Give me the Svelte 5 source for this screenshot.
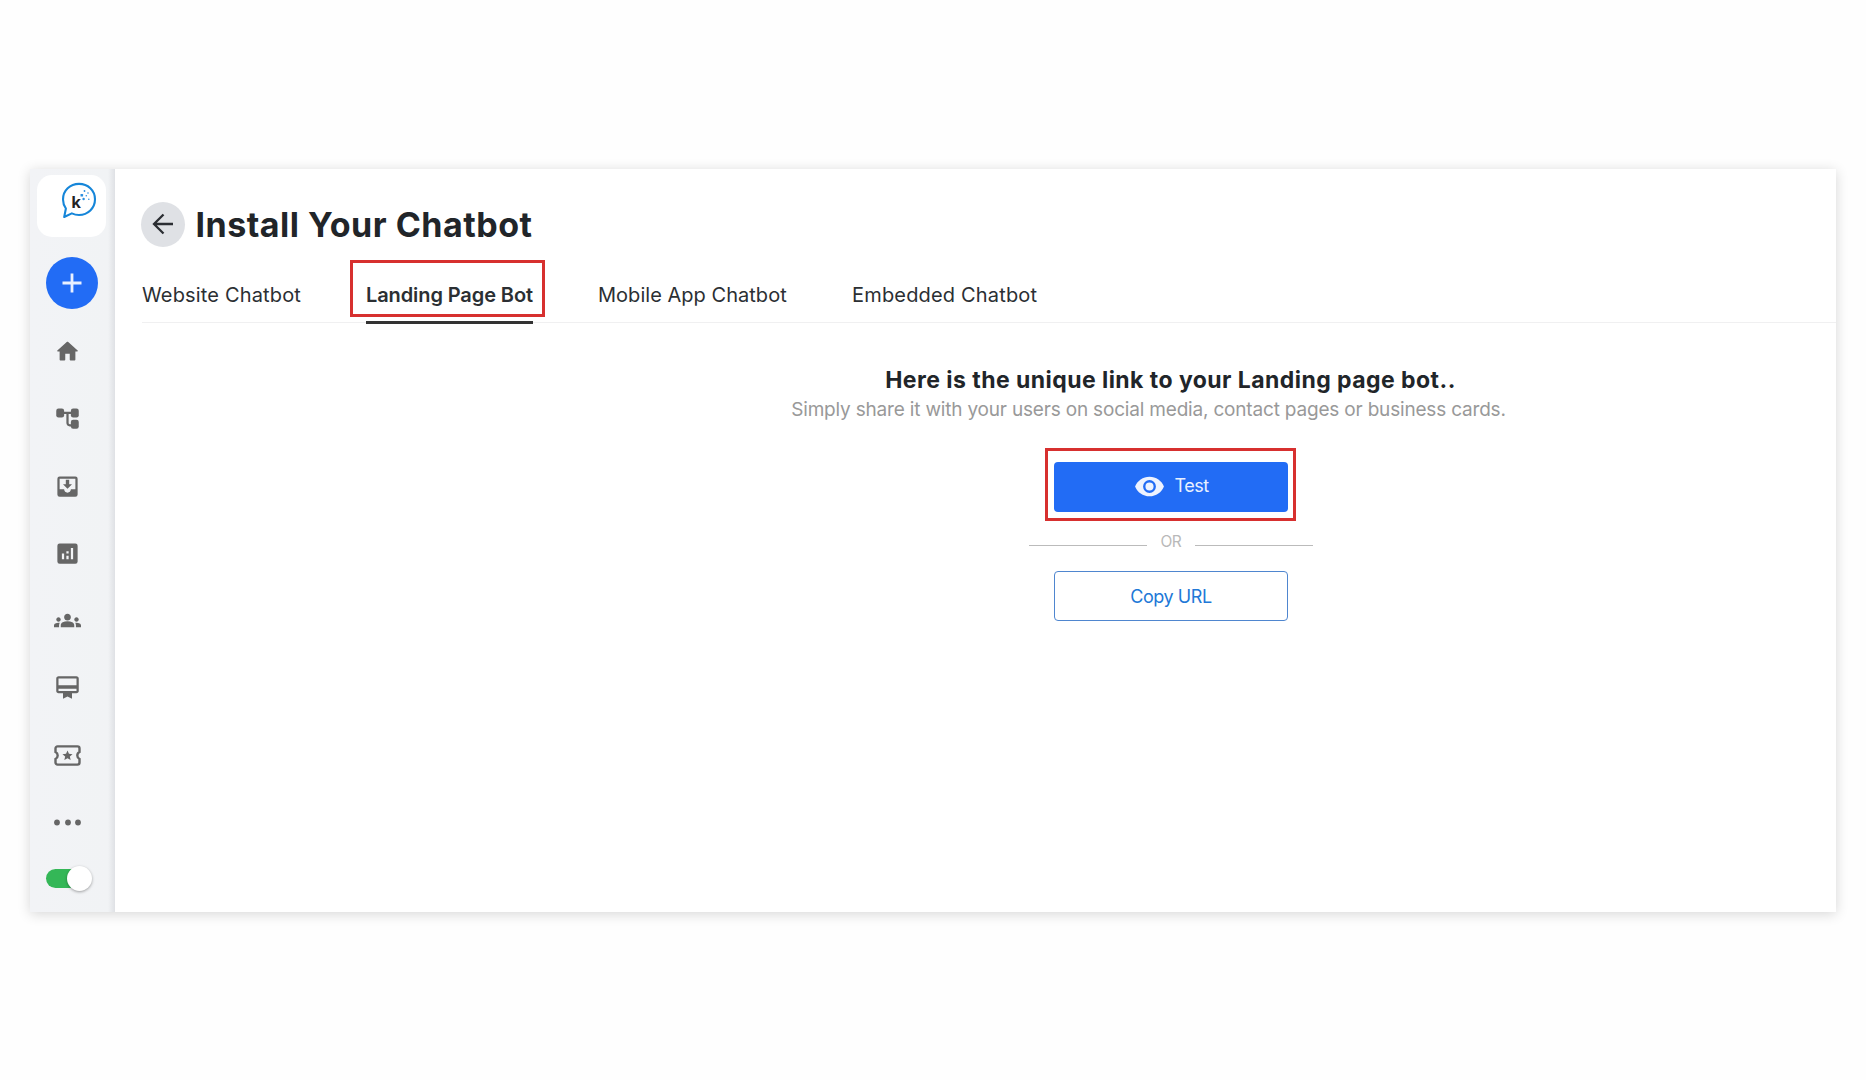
<script>
  const tabs = [
    { id: 'website', label: 'Website Chatbot' },
    { id: 'landing', label: 'Landing Page Bot' },
    { id: 'mobile', label: 'Mobile App Chatbot' },
    { id: 'embedded', label: 'Embedded Chatbot' }
  ];
  let active = $state('landing');
  let online = $state(true);
</script>

<div class="page">
<div class="card">
  <aside>
    <div class="logo">
      <svg viewBox="0 0 36 37" width="36" height="37">
        <path d="M18 1.900c8.900 0 16 6.500 16 15.400S26.900 33 18 33c-2.700 0-5-.6-7.200-1.600L3.200 35l1.700-8.500C3.200 24 2 21 2 17.400 2 8.500 9.100 1.900 18 1.900z" fill="#fff" stroke="#1686d9" stroke-width="2.100" stroke-linejoin="round" />
        <g fill="#2b8fe0">
          <rect x="19.500" y="12" width="2.600" height="2.600" rx=".6" />
          <circle cx="23.500" cy="9" r=".9" />
          <circle cx="27" cy="11" r=".8" />
          <circle cx="25.300" cy="13.800" r=".8" />
          <circle cx="22.600" cy="17" r="1.200" />
          <circle cx="27.800" cy="17.300" r=".8" />
        </g>
        <text x="10.300" y="26.300" class="mark">k</text>
      </svg>
    </div>
    <button class="add" aria-label="Add">
      <svg viewBox="0 0 20 20" width="20" height="20"><path d="M10 .5v19M.5 10h19" stroke="#e9f0ff" stroke-width="2.800" /></svg>
    </button>
    <nav>
      <svg viewBox="0 0 24 24"><path d="M10 19v-5h4v5c0 .55.45 1 1 1h3c.55 0 1-.45 1-1v-7h1.700c.46 0 .68-.57.33-.87L12.670 3.600c-.38-.34-.96-.34-1.340 0l-8.360 7.530c-.34.3-.13.87.33.87H5v7c0 .55.45 1 1 1h3c.55 0 1-.45 1-1z" /></svg>
      <svg viewBox="0 0 24 24"><rect x="2" y="3" width="7" height="8" rx="2" /><rect x="15" y="3" width="7" height="8" rx="2" /><rect x="15" y="13" width="7" height="8" rx="2" /><path d="M8 6h8v2h-3v8c0 .55.45 1 1 1h2v2h-2c-1.650 0-3-1.350-3-3V8H8z" /></svg>
      <svg viewBox="0 0 24 24"><path d="M19 3H5a2 2 0 0 0-2 2v14a2 2 0 0 0 2 2h14a2 2 0 0 0 2-2V5a2 2 0 0 0-2-2zm0 11.500h-4c0 1.700-1.350 3-3 3s-3-1.300-3-3H5V5h14zM16 10h-2.500V6h-3v4H8l4 4z" /></svg>
      <svg viewBox="0 0 24 24"><path d="M19 3H5a2 2 0 0 0-2 2v14a2 2 0 0 0 2 2h14a2 2 0 0 0 2-2V5a2 2 0 0 0-2-2zM9 17H7v-5h2zm4 0h-2v-3h2zm0-5h-2v-2h2zm4 5h-2V7h2z" fill-rule="evenodd" /></svg>
      <svg viewBox="0 0 24 24"><path d="M12 12.750c1.630 0 3.070.39 4.240.9 1.080.48 1.760 1.560 1.760 2.730V18H6v-1.610c0-1.180.68-2.260 1.760-2.730 1.170-.52 2.610-.91 4.240-.91zM4 13c1.100 0 2-.9 2-2s-.9-2-2-2-2 .9-2 2 .9 2 2 2zm1.130 1.100C4.760 14.040 4.390 14 4 14c-.99 0-1.930.21-2.780.58C.48 14.900 0 15.620 0 16.430V18h4.500v-1.610c0-.83.23-1.610.63-2.290zM20 13c1.100 0 2-.9 2-2s-.9-2-2-2-2 .9-2 2 .9 2 2 2zm4 3.430c0-.81-.48-1.530-1.220-1.850C21.930 14.210 20.990 14 20 14c-.39 0-.76.04-1.130.1.400.68.630 1.460.630 2.290V18H24zM12 6c1.660 0 3 1.340 3 3s-1.340 3-3 3-3-1.340-3-3 1.340-3 3-3z" /></svg>
      <svg viewBox="0 0 24 24"><path d="M20 2H4c-1.110 0-2 .89-2 2v11c0 1.110.89 2 2 2h4v5l4-2 4 2v-5h4c1.110 0 2-.89 2-2V4c0-1.110-.89-2-2-2zm0 13H4v-2h16zm0-5H4V4h16z" /></svg>
      <svg viewBox="0 0 27 24"><path d="M3.500 2.900h20a2 2 0 0 1 2 2v3.600a3.900 3.900 0 0 0 0 7v3.600a2 2 0 0 1-2 2h-20a2 2 0 0 1-2-2v-3.600a3.900 3.900 0 0 0 0-7V4.900a2 2 0 0 1 2-2z" fill="none" stroke="#666" stroke-width="2.400" /><path d="M13.500 7l1.450 3.300 3.600.35-2.700 2.400.8 3.550-3.150-1.850-3.150 1.850.8-3.550-2.700-2.400 3.600-.35z" /></svg>
      <svg viewBox="0 0 27 24"><circle cx="3" cy="12" r="2.900" /><circle cx="14" cy="12" r="2.900" /><circle cx="24" cy="12" r="2.900" /></svg>
    </nav>
    <button class="toggle" class:on={online} aria-label="Online" onclick={() => (online = !online)}><span></span></button>
  </aside>

  <main>
    <header>
      <button class="back" aria-label="Back">
        <svg viewBox="0 0 22 22" width="22" height="22"><path d="M21 11H2M11.500 1.500L2 11l9.500 9.500" fill="none" stroke="#2b2e33" stroke-width="2.300" /></svg>
      </button>
      <h1>Install Your Chatbot</h1>
    </header>
    <div class="tabs">
      {#each tabs as tab}
        <button class="tab {tab.id}" class:active={active === tab.id} onclick={() => (active = tab.id)}>{tab.label}</button>
      {/each}
    </div>
    <section>
      <h2>Here is the unique link to your Landing page bot..</h2>
      <p>Simply share it with your users on social media, contact pages or business cards.</p>
      <div class="highlight">
        <button class="test">
          <svg viewBox="1 4 22 16" width="29" height="21"><path d="M12 4.500C7 4.500 2.730 7.610 1 12c1.730 4.390 6 7.500 11 7.500s9.270-3.110 11-7.500c-1.730-4.390-6-7.500-11-7.500z" fill="#eef3ff" /><circle cx="12" cy="12" r="4" fill="none" stroke="#226cf5" stroke-width="1.800" /></svg>
          <span>Test</span>
        </button>
      </div>
      <div class="or"><i></i><span>OR</span><i></i></div>
      <button class="copy"><span>Copy URL</span></button>
    </section>
  </main>
</div>
</div>

<style>
  :global(body) { margin: 0; background: #fefefe; font-family: Inter, "Liberation Sans", sans-serif; color: #212529; }
  .page, .page :global(*), .page :global(*::before) { box-sizing: border-box; }
  .page { height: 1080px; padding: 169px 0 0 30px; }
  button { font: inherit; color: inherit; border: 0; padding: 0; margin: 0; background: none; }
  svg { display: block; flex: none; }
  .card { display: flex; width: 1806px; height: 743px; background: #fff; box-shadow: 0 2px 12px rgba(0, 0, 0, .16); }
  aside { width: 85px; flex: none; padding: 6px 0 0 7px; background: linear-gradient(90deg, #f2f3f6 0, #f1f3f5 78px, #dfe1e5 85px); }
  .logo { width: 69px; height: 62px; border-radius: 15px; background: #fff; padding: 7px 0 0 24px; }
  .mark { font: 700 15.500px "Open Sans", sans-serif; fill: #222; }
  .add { display: flex; align-items: center; justify-content: center; width: 52px; height: 52px; margin: 19.500px 0 0 9px; border-radius: 50%; background: #226cf5; }
  nav { display: flex; flex-direction: column; gap: 40.300px; padding: 29.500px 0 0 16.800px; }
  nav svg { width: 27px; height: 27px; fill: #666; overflow: visible; }
  .toggle { display: flex; align-items: center; width: 44px; height: 19px; margin: 33px 0 0 9px; border-radius: 10px; background: #aaa; }
  .toggle.on { background: #34b757; }
  .toggle span { width: 25px; height: 25px; flex: none; border-radius: 50%; background: #fff; box-shadow: 0 1px 3px rgba(0, 0, 0, .35); }
  .toggle.on span { margin-left: 21px; }
  main { flex: 1; min-width: 0; }
  header { display: flex; align-items: center; height: 46px; padding-left: 26px; margin-top: 32px; }
  .back { display: flex; align-items: center; justify-content: center; width: 44px; height: 45px; border-radius: 50%; background: #dfe1e5; }
  h1 { margin: 1px 0 0 10.500px; font-size: 34px; line-height: 46px; font-weight: 700; letter-spacing: .5px; white-space: nowrap; }
  .tabs { display: flex; align-items: flex-start; height: 62px; margin: 14px 0 0 27px; border-bottom: 1px solid #f0f0f1; }
  .tab { height: 63px; padding: 5px 0 0; border-bottom: 3px solid transparent; font-size: 20px; line-height: 58px; white-space: nowrap; text-align: left; color: #2b2f33; }
  .website { width: 159px; letter-spacing: .16px; }
  .landing { width: 167px; margin-left: 65px; letter-spacing: -.1px; }
  .mobile { width: 189px; margin-left: 65px; letter-spacing: .03px; }
  .embedded { margin-left: 65px; letter-spacing: .17px; }
  .tab.active { position: relative; font-weight: 600; border-color: #333; }
  .landing.active::before { content: ''; position: absolute; left: -16px; right: -12px; top: -1px; height: 57px; border: 3px solid #d7302f; }
  section { display: flex; flex-direction: column; align-items: center; padding-left: 390px; }
  h2 { margin: 41px 0 0; font-size: 23px; line-height: 32px; font-weight: 700; letter-spacing: .45px; white-space: nowrap; }
  p { margin: 0 44px 0 0; font-size: 19px; line-height: 28px; letter-spacing: -.185px; color: #999; white-space: nowrap; }
  .highlight { width: 251px; height: 73px; margin-top: 24px; padding: 11px 5px 0 6px; border: 3px solid #d7302f; }
  .test { display: flex; align-items: center; gap: 11px; width: 234px; height: 50px; padding: 0 0 2px 80.500px; border-radius: 4px; background: #226cf5; color: #e8f0ff; font-size: 18px; letter-spacing: -.5px; }
  .test span { margin-top: -1px; }
  .or { display: flex; gap: 13px; width: 284px; height: 50px; color: #b9b9b9; font-size: 15.500px; letter-spacing: -.5px; }
  .or i { flex: 1; height: 1px; margin-top: 24px; background: #bbb; }
  .or span { width: 22px; padding-left: 1px; line-height: 42px; }
  .copy { width: 234px; height: 50px; padding: 1px 0 0 1px; border: 1px solid #4f86cf; border-radius: 4px; font-size: 18px; letter-spacing: -.45px; color: #2178d7; }
</style>
